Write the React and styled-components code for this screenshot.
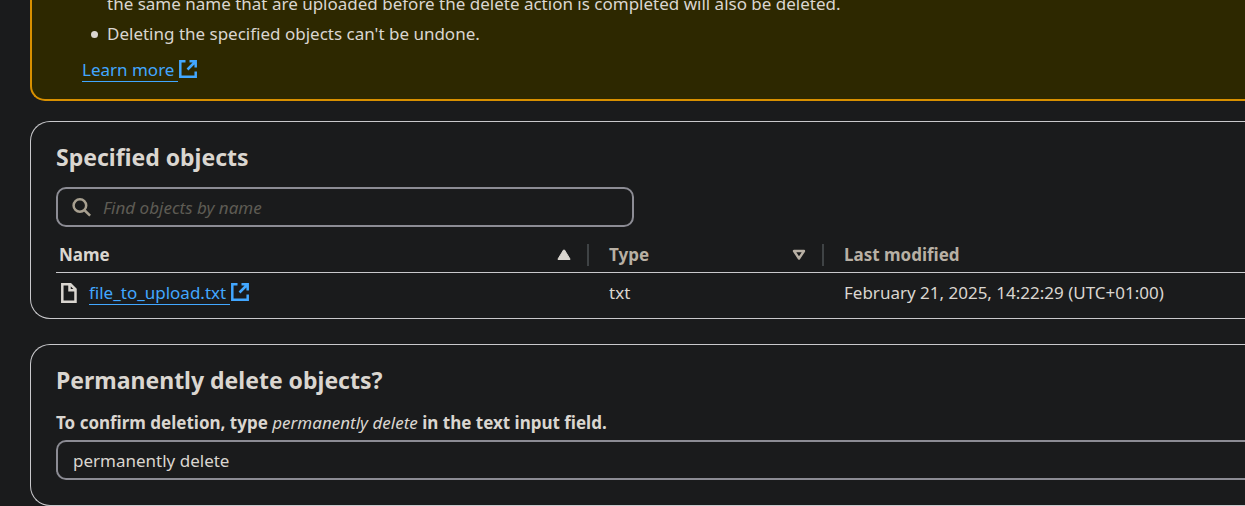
import React, { useState } from "react";
import styled, { createGlobalStyle } from "styled-components";

const Global = createGlobalStyle`
  *, *::before, *::after { box-sizing: border-box; }
  html, body { margin: 0; overflow: hidden; background: #1a1b1c; }
  body {
    color: #dad6d0;
    font: 400 17px/24px "Noto Sans", sans-serif;
  }
`;

const Page = styled.main`
  padding-left: 30px;
`;

const Alert = styled.section`
  padding: 0 24px 17px 50px;
  background: #2d2800;
  border: 2px solid #d89000;
  border-width: 0 0 2px 2px;
  border-bottom-left-radius: 15px;
`;

const Notes = styled.ul`
  display: grid;
  gap: 6px;
  margin: -8px 0 12px;
  padding: 0;
  list-style: none;
`;

const Note = styled.li`
  display: grid;
  grid-template-columns: 7px 1fr;
  align-items: center;
  gap: 9px;
  padding-left: 9px;

  &::before {
    content: "";
    height: 7px;
    border-radius: 50%;
    background: ${(p) => (p.$continued ? "transparent" : "currentColor")};
  }
`;

const Link = styled.a`
  display: inline-flex;
  align-items: flex-start;
  color: #42a7ff;
  text-decoration: none;

  svg { flex: none; }
`;

const LinkText = styled.span`
  padding-right: 4px;
  line-height: 22px;
  border-bottom: 1px solid currentColor;
`;

const Card = styled.section`
  margin-top: ${(p) => (p.$first ? 20 : 25)}px;
  padding: 20px 0 ${(p) => (p.$flush ? 5 : 25)}px 25px;
  border: 1px solid #c9c9cc;
  border-right: 0;
  border-radius: 20px 0 0 20px;
`;

const Title = styled.h2`
  margin: 0 0 ${(p) => (p.$spaced ? 16 : 15)}px;
  font-size: 23px;
  line-height: 30px;
  font-weight: 700;
`;

const Field = styled.div`
  display: flex;
  align-items: center;
  gap: 11px;
  height: 40px;
  max-width: ${(p) => (p.$search ? "578px" : "none")};
  padding: 0 ${(p) => (p.$search ? 14 : 15)}px;
  border: 2px solid #8c8c94;
  border-width: ${(p) => (p.$search ? "2px" : "2px 0 2px 2px")};
  border-radius: ${(p) => (p.$search ? "10px" : "10px 0 0 10px")};
`;

const Input = styled.input`
  flex: 1;
  min-width: 0;
  padding: 2px 0 0;
  border: 0;
  outline: 0;
  background: none;
  color: inherit;
  font: inherit;

  &::placeholder { color: #5e5b54; font-style: italic; opacity: 1; }
`;

const Label = styled.label`
  display: block;
  margin-bottom: 5px;
  font-weight: 700;

  em { font-weight: 400; }
`;

const Table = styled.table`
  width: 100%;
  margin-top: 10px;
  border-collapse: separate;
  border-spacing: 0;
  table-layout: fixed;
`;

const Th = styled.th`
  width: ${(p) => p.$width || "auto"};
  height: 36px;
  padding: 0 0 0 ${(p) => (p.$lead ? 3 : 20)}px;
  border-bottom: 1px solid #c9c9cc;
  color: ${(p) => (p.$lead ? "inherit" : "#b8b0a4")};
  text-align: left;
`;

const HeadCell = styled.div`
  display: flex;
  align-items: center;
  justify-content: space-between;
  height: 22px;
  padding-right: 16px;
  border-right: ${(p) => (p.$last ? "0" : "2px solid #3f4345")};
`;

const Sort = styled.button`
  display: flex;
  padding: 0;
  border: 0;
  background: none;
  color: inherit;
`;

const Td = styled.td`
  height: 40px;
  padding: 0 0 0 ${(p) => (p.$lead ? 3 : 20)}px;
`;

const FileCell = styled.div`
  display: flex;
  align-items: flex-start;
  gap: 10px;
`;

const ExternalIcon = () => (
  <svg width="20" height="20" viewBox="0 0 20 20" fill="none" stroke="currentColor" strokeWidth="2.5" aria-hidden="true">
    <path d="M7.5 2.3H2.3v15.4h15.4v-5.2M11.5 2.3h6.2v6.2M17.5 2.5 9.5 10.5" />
  </svg>
);

const FileIcon = () => (
  <svg width="20" height="22" viewBox="0 0 20 22" fill="none" stroke="currentColor" strokeWidth="2.5" aria-hidden="true">
    <path d="M3.3 2.3h8.2l5 5v12.4H3.3zM10.5 2.3v6h6" />
  </svg>
);

const SearchIcon = () => (
  <svg width="20" height="20" viewBox="0 0 20 20" fill="none" stroke="#a8a090" strokeWidth="2.5" aria-hidden="true">
    <circle cx="7.9" cy="8.5" r="6.3" />
    <path d="m12.3 13 5.8 5.7" />
  </svg>
);

const SortUp = () => (
  <svg width="14" height="12" viewBox="0 0 14 12" fill="currentColor" stroke="currentColor" strokeLinejoin="round" aria-hidden="true">
    <path d="M6.5 1h1L13 10v.5H1V10z" />
  </svg>
);

const SortDown = () => (
  <svg width="14" height="12" viewBox="0 0 14 12" fill="none" stroke="currentColor" strokeWidth="2.4" strokeLinejoin="round" aria-hidden="true">
    <path d="M2 2h10L7 9.5z" />
  </svg>
);

export default function App() {
  const [confirmation, setConfirmation] = useState("permanently delete");
  const [query, setQuery] = useState("");

  return (
    <>
      <Global />
      <Page>
        <Alert>
          <Notes>
            <Note $continued>
              the same name that are uploaded before the delete action is completed will also be deleted.
            </Note>
            <Note>Deleting the specified objects can't be undone.</Note>
          </Notes>
          <Link href="#learn-more">
            <LinkText>Learn more</LinkText>
            <ExternalIcon />
          </Link>
        </Alert>

        <Card $first $flush>
          <Title>Specified objects</Title>
          <Field $search>
            <SearchIcon />
            <Input
              type="text"
              aria-label="Find objects by name"
              placeholder="Find objects by name"
              value={query}
              onChange={(e) => setQuery(e.target.value)}
            />
          </Field>
          <Table>
            <thead>
              <tr>
                <Th $lead $width="533px" scope="col">
                  <HeadCell>Name<Sort aria-label="Sort by name"><SortUp /></Sort></HeadCell>
                </Th>
                <Th $width="235px" scope="col">
                  <HeadCell>Type<Sort aria-label="Sort by type"><SortDown /></Sort></HeadCell>
                </Th>
                <Th scope="col"><HeadCell $last>Last modified</HeadCell></Th>
              </tr>
            </thead>
            <tbody>
              <tr>
                <Td $lead>
                  <FileCell>
                    <FileIcon />
                    <Link href="#file"><LinkText>file_to_upload.txt</LinkText><ExternalIcon /></Link>
                  </FileCell>
                </Td>
                <Td>txt</Td>
                <Td>February 21, 2025, 14:22:29 (UTC+01:00)</Td>
              </tr>
            </tbody>
          </Table>
        </Card>

        <Card>
          <Title $spaced>Permanently delete objects?</Title>
          <Label htmlFor="confirm">
            To confirm deletion, type <em>permanently delete</em> in the text input field.
          </Label>
          <Field>
            <Input
              id="confirm"
              type="text"
              value={confirmation}
              onChange={(e) => setConfirmation(e.target.value)}
            />
          </Field>
        </Card>
      </Page>
    </>
  );
}
